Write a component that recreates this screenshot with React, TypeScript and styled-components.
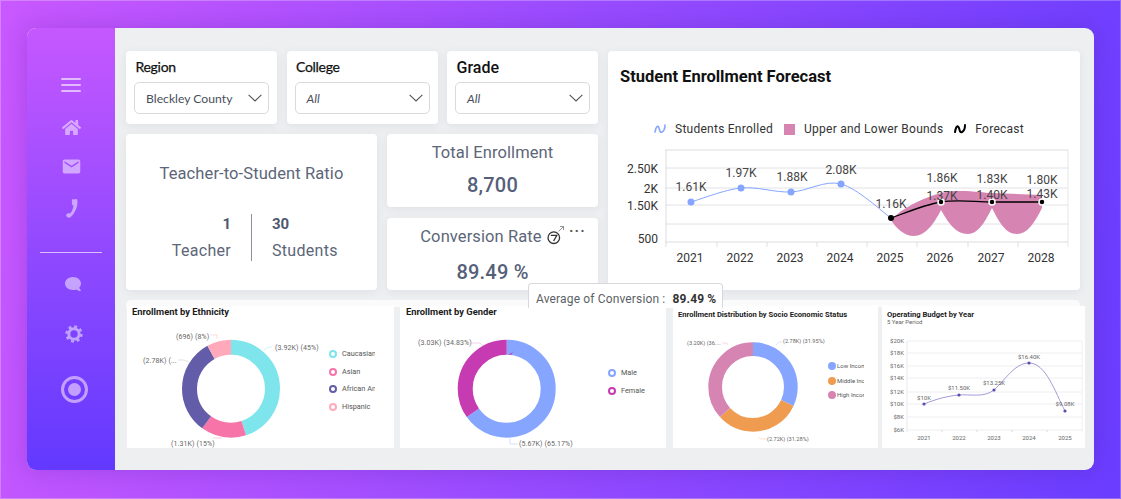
import React, { FC } from "react";
import styled, { createGlobalStyle } from "styled-components";
import { FaHome, FaComment } from "react-icons/fa";
import { MdEmail } from "react-icons/md";

const GlobalStyle = createGlobalStyle`
    html, body {
        margin: 0;
        padding: 0;
        overflow: hidden;
    }
    * {
        box-sizing: border-box;
    }
`;

const Page = styled.div`
    width: 1121px;
    height: 499px;
    padding: 28px 27px 29px;
    background: linear-gradient(100deg, #c958ff 0%, #9a4cff 48%, #6a3dff 100%);
    box-shadow: inset 0 0 0 1px rgba(255, 255, 255, 0.25);
    font-family: Roboto, sans-serif;
`;

const Frame = styled.div`
    display: flex;
    width: 1067px;
    height: 442px;
    border-radius: 9px;
    overflow: hidden;
    background: #eeeff1;
    box-shadow: 0 0 24px rgba(60, 20, 130, 0.22);
`;

const Sidebar = styled.nav`
    width: 88px;
    flex: none;
    display: flex;
    flex-direction: column;
    align-items: center;
    padding-top: 46px;
    background: linear-gradient(180deg, #c558ff 0%, #8c48ff 55%, #6339ff 100%);
    color: rgba(255, 255, 255, 0.5);
`;

const NavSlot = styled.div<{ $top: number; $shift?: number }>`
    display: flex;
    justify-content: center;
    align-items: center;
    height: 22px;
    margin-top: ${(p) => p.$top}px;
    padding-left: ${(p) => p.$shift ?? 0}px;
`;

const Burger = styled.div`
    display: flex;
    flex-direction: column;
    gap: 4px;
    width: 20px;
    span {
        height: 2px;
        border-radius: 1px;
        background: rgba(255, 255, 255, 0.6);
    }
`;

const Divider = styled.div`
    width: 62px;
    height: 1px;
    margin-top: 33px;
    background: rgba(255, 255, 255, 0.65);
`;

const ChatIcon = styled(FaComment)`
    transform: scaleX(-1);
`;

const Ring = styled.div`
    display: flex;
    align-items: center;
    justify-content: center;
    width: 27px;
    height: 27px;
    margin-left: 6px;
    margin-top: 31px;
    border: 3px solid #c3a0ff;
    border-radius: 50%;
    &::after {
        content: "";
        width: 13px;
        height: 13px;
        border-radius: 50%;
        background: #c3a0ff;
    }
`;

const Main = styled.main`
    flex: 1;
    min-width: 0;
    padding: 23px 0 0 11px;
`;

const TopGrid = styled.div`
    display: grid;
    grid-template-columns: 472px 472px;
    column-gap: 10px;
`;

const LeftColumn = styled.div`
    display: flex;
    flex-direction: column;
    gap: 10px;
`;

const FilterRow = styled.div`
    display: flex;
    justify-content: space-between;
`;

const Card = styled.section`
    background: #fff;
    border-radius: 4px;
    box-shadow: 0 2px 8px rgba(60, 60, 90, 0.08);
`;

const FilterCard = styled(Card)`
    width: 151px;
    height: 73px;
    padding: 8px 8px 0;
    display: flex;
    flex-direction: column;
`;

const FilterLabel = styled.div<{ $large?: boolean }>`
    height: 17px;
    padding-left: 1.5px;
    color: #111;
    font-family: ${(p) => (p.$large ? "Roboto" : "Lato")}, sans-serif;
    font-size: ${(p) => (p.$large ? 16 : 14)}px;
    font-weight: ${(p) => (p.$large ? 500 : 400)};
    line-height: ${(p) => (p.$large ? 18 : 16)}px;
    letter-spacing: ${(p) => (p.$large ? 0 : -0.3)}px;
    -webkit-text-stroke: ${(p) => (p.$large ? 0 : 0.25)}px #111;
`;

const Select = styled.div`
    display: flex;
    align-items: center;
    justify-content: space-between;
    height: 32px;
    margin-top: 6px;
    padding: 0 6px 0 11px;
    border: 1px solid #d9dade;
    border-radius: 5px;
    color: #4a4f5c;
    font-family: Lato, sans-serif;
    font-size: 12.2px;
`;

const SelectValue = styled.span<{ $italic?: boolean }>`
    font-style: ${(p) => (p.$italic ? "italic" : "normal")};
`;

const KpiRow = styled.div`
    display: flex;
    gap: 10px;
`;

const RatioCard = styled(Card)`
    width: 251px;
    height: 156px;
    display: flex;
    flex-direction: column;
    align-items: center;
    padding-top: 30px;
    color: #5c6678;
`;

const KpiTitle = styled.div`
    font-size: 16.5px;
    line-height: 20px;
    color: #5c6678;
    letter-spacing: 0.1px;
    white-space: nowrap;
`;

const RatioBody = styled.div`
    display: grid;
    grid-template-columns: 125px 1px 125px;
    width: 251px;
    height: 46px;
    margin-top: 30px;
`;

const RatioSide = styled.div<{ $end?: boolean }>`
    display: flex;
    flex-direction: column;
    align-items: ${(p) => (p.$end ? "flex-end" : "flex-start")};
    padding: ${(p) => (p.$end ? "0 20px 0 0" : "0 0 0 20px")};
`;

const RatioNumber = styled.div`
    font-size: 15px;
    font-weight: 700;
    line-height: 20px;
    color: #4e5870;
`;

const RatioLabel = styled.div`
    margin-top: 7px;
    font-size: 16px;
    line-height: 20px;
    letter-spacing: 0.3px;
`;

const RatioRule = styled.div`
    background: #8a909c;
`;

const KpiColumn = styled.div`
    width: 211px;
    display: flex;
    flex-direction: column;
    gap: 11px;
`;

const KpiCard = styled(Card)`
    position: relative;
    height: 72.5px;
    padding-top: 9px;
    display: flex;
    flex-direction: column;
    align-items: center;
`;

const KpiValue = styled.div<{ $top: number }>`
    margin-top: ${(p) => p.$top}px;
    font-size: 20px;
    font-weight: 500;
    line-height: 26px;
    color: #55607a;
    letter-spacing: 0.2px;
`;

const TitleRow = styled.div`
    display: flex;
    align-items: center;
    gap: 5px;
    margin-top: -1px;
`;

const Dots = styled.div`
    position: absolute;
    top: 2px;
    right: 12px;
    font-size: 14px;
    font-weight: 700;
    line-height: 14px;
    letter-spacing: 1.5px;
    color: #555;
`;

const Tooltip = styled.div`
    position: absolute;
    z-index: 3;
    left: 141px;
    top: 65px;
    display: flex;
    gap: 7px;
    width: 195px;
    height: 25px;
    padding: 8px 0 0 7px;
    background: #fff;
    border: 1px solid #d8d8dc;
    border-radius: 4px 4px 0 0;
    border-bottom: none;
    font-size: 12px;
    line-height: 15px;
    letter-spacing: 0.15px;
    color: #5b5f66;
    white-space: nowrap;
    b {
        font-weight: 700;
        color: #333;
    }
`;

const ForecastCard = styled(Card)`
    height: 239px;
    padding-top: 16px;
    display: flex;
    flex-direction: column;
`;

const ForecastTitle = styled.h2`
    margin: 0 0 0 12px;
    font-size: 16.5px;
    font-weight: 700;
    line-height: 20px;
    color: #111;
`;

const ForecastLegend = styled.div`
    display: flex;
    align-items: center;
    justify-content: center;
    gap: 11px;
    height: 18px;
    margin-top: 33px;
    padding-right: 10px;
    font-size: 12px;
    letter-spacing: 0.25px;
    color: #333;
`;

const LegendEntry = styled.div`
    display: flex;
    align-items: center;
    gap: 9px;
`;

const LegendSwatch = styled.span`
    width: 11px;
    height: 11px;
    background: #d685b3;
`;

const ChartSvg = styled.svg`
    display: block;
    flex: none;
    font-family: Roboto, sans-serif;
`;

const Strip = styled.div`
    width: 954px;
    height: 7px;
    margin-top: 10px;
    background: #fbfbfc;
    border-radius: 5px 5px 0 0;
`;

const ChartRow = styled.div`
    display: flex;
    height: 142px;
    margin-left: 1px;
    margin-top: -1px;
`;

const ChartCard = styled.section<{ $w: number; $after: number }>`
    position: relative;
    flex: none;
    width: ${(p) => p.$w}px;
    margin-right: ${(p) => p.$after}px;
    background: #fff;
    overflow: hidden;
`;

const ChartTitle = styled.h3<{ $left: number; $size?: number; $top?: number }>`
    margin: 0;
    padding: ${(p) => p.$top ?? 0}px 0 0 ${(p) => p.$left}px;
    height: 12px;
    font-size: ${(p) => p.$size ?? 9.4}px;
    font-weight: 700;
    line-height: 12px;
    color: #1b1b1b;
    white-space: nowrap;
`;

const ChartSub = styled.div`
    padding-left: 5px;
    height: 8px;
    font-size: 6px;
    line-height: 8px;
    color: #666;
`;

const ChartBody = styled.div`
    display: flex;
`;

const Legend = styled.ul<{ $top: number; $gap: number; $w: number }>`
    list-style: none;
    margin: ${(p) => p.$top}px 0 0;
    padding: 0;
    width: ${(p) => p.$w}px;
    display: flex;
    flex-direction: column;
    gap: ${(p) => p.$gap}px;
    overflow: hidden;
`;

const LegendItem = styled.li<{ $tight?: boolean }>`
    display: flex;
    align-items: center;
    gap: ${(p) => (p.$tight ? 1 : 5)}px;
    height: 10px;
    font-size: ${(p) => (p.$tight ? 6 : 7.3)}px;
    line-height: 10px;
    color: #555;
    white-space: nowrap;
`;

const LegendRing = styled.span<{ $color: string; $solid?: boolean }>`
    flex: none;
    width: 8px;
    height: 8px;
    border-radius: 50%;
    border: ${(p) => (p.$solid ? 4 : 2.8)}px solid ${(p) => p.$color};
`;

type Point = [number, number];

// catmull-rom through the points, close enough to the chart lib's spline
const smooth = (pts: Point[]): string => {
    let d = `M${pts[0][0]} ${pts[0][1]}`;
    for (let i = 0; i < pts.length - 1; i++) {
        const p0 = pts[Math.max(i - 1, 0)];
        const p1 = pts[i];
        const p2 = pts[i + 1];
        const p3 = pts[Math.min(i + 2, pts.length - 1)];
        const c1x = p1[0] + (p2[0] - p0[0]) / 6;
        const c1y = p1[1] + (p2[1] - p0[1]) / 6;
        const c2x = p2[0] - (p3[0] - p1[0]) / 6;
        const c2y = p2[1] - (p3[1] - p1[1]) / 6;
        d += ` C${c1x} ${c1y} ${c2x} ${c2y} ${p2[0]} ${p2[1]}`;
    }
    return d;
};

interface Slice {
    value: number;
    color: string;
}

const Donut: FC<{ cx: number; cy: number; outer: number; inner: number; slices: Slice[] }> = ({
    cx,
    cy,
    outer,
    inner,
    slices,
}) => {
    let start = 0;
    return (
        <g transform={`rotate(-90 ${cx} ${cy})`}>
            {slices.map((s) => {
                const el = (
                    <circle
                        key={s.color}
                        cx={cx}
                        cy={cy}
                        r={(outer + inner) / 2}
                        fill="none"
                        stroke={s.color}
                        strokeWidth={outer - inner}
                        pathLength={100}
                        strokeDasharray={`${s.value} ${100 - s.value}`}
                        strokeDashoffset={-start}
                    />
                );
                start += s.value;
                return el;
            })}
        </g>
    );
};

const ChevronDown = () => (
    <svg width="14" height="8" viewBox="0 0 14 8" fill="none" stroke="#555" strokeWidth="1.1">
        <path d="M0.6 0.8L7 7l6.4-6.2" />
    </svg>
);

const LineGlyph: FC<{ color: string; width?: number }> = ({ color, width = 1.6 }) => (
    <svg width="12" height="10" viewBox="0 0 12 10" fill="none" stroke={color} strokeWidth={width} strokeLinecap="round">
        <path d="M1 8C2 2 4 1 5 4s1 5 3 4 3-4 3-7" />
    </svg>
);

const PhoneGlyph = () => (
    <svg width="12" height="19" viewBox="0 0 12 19" fill="currentColor">
        <path d="M7.5 0.6l2.6-0.5c0.6 0 1 0.3 1.2 0.9 0.8 5.5-1.5 12.2-6.6 17-0.5 0.5-1 0.7-1.6 0.7-1.3 0-2.7-0.8-2.9-1.6-0.2-1.1 0.3-2.1 1.3-2.6 1.1-0.5 1.9-0.4 2.7 0.1 1.9-2.3 3-5 3.2-8-1-0.3-1.5-0.8-1.5-1.8l0-2.6c0-1 0.2-1.6 0.6-2.1z" />
    </svg>
);

const GearGlyph = () => (
    <svg width="18" height="18" viewBox="0 0 18 18" fill="none" stroke="currentColor">
        <circle cx="9" cy="9" r="5.2" strokeWidth="3" />
        <circle cx="9" cy="9" r="7.6" strokeWidth="2.2" strokeDasharray="3 2.97" />
    </svg>
);

const ZodiacGlyph = () => (
    <svg width="18" height="22" viewBox="0 0 18 22" fill="none" stroke="#333" strokeWidth="1.3">
        <circle cx="6.8" cy="11.7" r="5.8" />
        <path d="M3.8 9.4h6L6.6 15" />
        <path d="M11.5 5.5l5-5M13 0.5h3.5V4" strokeWidth="0.8" stroke="#777" />
    </svg>
);

const forecastYears: [string, number][] = [
    ["2021", 691],
    ["2022", 741],
    ["2023", 791],
    ["2024", 841],
    ["2025", 891],
    ["2026", 941],
    ["2027", 992],
    ["2028", 1042],
];

const actual: Point[] = [
    [691, 202],
    [741, 188],
    [791, 192],
    [841, 184],
    [891, 218],
];

const forecast: Point[] = [
    [891, 218],
    [941, 202],
    [992, 202],
    [1042, 202],
];

const bandPath =
    "M891 220C898 212 916 200 941 193C950 191 955 191 960 191C975 191 985 193 992 193L1042 195L1042 208" +
    "C1034 224 1027 234 1017 234C1005 234 998 220 992 208C985 222 978 234 968 234C955 234 948 222 941 210" +
    "C934 224 925 236 914 236C904 236 896 228 891 220Z";

const ForecastChart = () => (
    <ChartSvg width="472" height="152" viewBox="608 138 472 152">
        {[150, 168, 188, 205, 224, 242].map((y) => (
            <line key={y} x1="665" x2="1068" y1={y} y2={y} stroke={y === 150 || y === 242 ? "#dcdde0" : "#e1e2e5"} />
        ))}
        <line x1="666" x2="666" y1="150" y2="247" stroke="#dcdde0" />
        <line x1="1068" x2="1068" y1="150" y2="247" stroke="#e6e7ea" />
        {[717, 767, 817, 867, 917, 968, 1018].map((x) => (
            <line key={x} x1={x} x2={x} y1="242" y2="247" stroke="#dcdde0" />
        ))}
        <g fontSize="12" fill="#333" textAnchor="end">
            <text x="658" y="173">2.50K</text>
            <text x="658" y="193">2K</text>
            <text x="658" y="210">1.50K</text>
            <text x="658" y="243">500</text>
        </g>
        <g fontSize="12" fill="#333" textAnchor="middle">
            {forecastYears.map(([y, x]) => (
                <text key={y} x={x - 1} y="262">{y}</text>
            ))}
        </g>
        <path d={bandPath} fill="#d685b3" />
        <path d={smooth(actual)} fill="none" stroke="#85a5ff" strokeWidth="1" />
        <path d={smooth(forecast)} fill="none" stroke="#000" strokeWidth="1.3" />
        {actual.slice(0, 4).map(([x, y]) => (
            <circle key={x} cx={x} cy={y} r="3.5" fill="#85a5ff" />
        ))}
        {forecast.map(([x, y]) => (
            <circle key={x} cx={x} cy={y} r="3" fill="#000" stroke="#fff" strokeWidth={x === 891 ? 0 : 1.5} />
        ))}
        <g fontSize="12" fill="#444" textAnchor="middle">
            <text x="691" y="191">1.61K</text>
            <text x="741" y="177">1.97K</text>
            <text x="792" y="181">1.88K</text>
            <text x="841" y="174">2.08K</text>
            <text x="891" y="208">1.16K</text>
            <text x="942" y="182">1.86K</text>
            <text x="992" y="183">1.83K</text>
            <text x="1042" y="184">1.80K</text>
            <text x="942" y="200">1.37K</text>
            <text x="992" y="199">1.40K</text>
            <text x="1042" y="198">1.43K</text>
        </g>
    </ChartSvg>
);

const EthnicityChart = () => (
    <ChartSvg width="202" height="130" viewBox="127 318 202 130">
        <Donut
            cx={231}
            cy={388.7}
            outer={49}
            inner={34}
            slices={[
                { value: 45, color: "#7fe5ec" },
                { value: 15, color: "#f774a8" },
                { value: 32, color: "#635ca8" },
                { value: 8, color: "#ffa9ba" },
            ]}
        />
        <g fill="none" stroke="#d5d5e0" strokeWidth="0.7">
            <path d="M264 350l5-3h3" stroke="#bdeef2" />
            <path d="M210 335h7v4" stroke="#ffc9d4" />
            <path d="M178 360h6l5 2" />
            <path d="M222 438h-9" stroke="#fbb9d2" />
        </g>
        <g fontSize="7" fill="#666" letterSpacing="0.1">
            <text x="275" y="350">(3.92K) (45%)</text>
            <text x="176" y="339">(696) (8%)</text>
            <text x="143" y="363">(2.78K) (...</text>
            <text x="171" y="446">(1.31K) (15%)</text>
        </g>
    </ChartSvg>
);

const GenderChart = () => (
    <ChartSvg width="208" height="130" viewBox="400 318 208 130">
        <Donut
            cx={506.7}
            cy={388.7}
            outer={49}
            inner={34}
            slices={[
                { value: 65.17, color: "#85a5ff" },
                { value: 34.83, color: "#c63ab2" },
            ]}
        />
        <g fill="none" strokeWidth="0.7">
            <path d="M472 343h8l3 3" stroke="#efb8e4" />
            <path d="M510 438v6h8" stroke="#c4d2ff" />
        </g>
        <g fontSize="7" fill="#666" letterSpacing="0.1">
            <text x="418" y="345">(3.03K) (34.83%)</text>
            <text x="519" y="446">(5.67K) (65.17%)</text>
        </g>
    </ChartSvg>
);

const SocioChart = () => (
    <ChartSvg width="155" height="130" viewBox="673 318 155 130">
        <Donut
            cx={753}
            cy={387}
            outer={44.7}
            inner={31}
            slices={[
                { value: 31.95, color: "#85a5ff" },
                { value: 31.28, color: "#f09c50" },
                { value: 36.77, color: "#d685b3" },
            ]}
        />
        <g fill="none" strokeWidth="0.6">
            <path d="M776 345l3-3h3" stroke="#c4d2ff" />
            <path d="M722 343h5l1 2" stroke="#eec2dc" />
            <path d="M759 437l2 2h6" stroke="#f7cfa8" />
        </g>
        <g fontSize="5.6" fill="#666">
            <text x="783" y="343">(2.78K) (31.95%)</text>
            <text x="687" y="345">(3.20K) (36....</text>
            <text x="767" y="441">(2.72K) (31.28%)</text>
        </g>
    </ChartSvg>
);

const budget: Point[] = [
    [924, 404],
    [959, 395],
    [994, 390],
    [1029, 363],
    [1065, 411],
];

const BudgetChart = () => (
    <ChartSvg width="203" height="122" viewBox="882 326 203 122">
        {[341, 353, 366, 378, 392, 404, 417, 430].map((y, i) => (
            <g key={y}>
                <line x1="907" x2="1082" y1={y} y2={y} stroke="#eeeef1" />
                <text x="904" y={y + 2} fontSize="6" fill="#666" textAnchor="end">
                    {["$20K", "$18K", "$16K", "$14K", "$12K", "$10K", "$8K", "$6K"][i]}
                </text>
            </g>
        ))}
        <line x1="907" x2="907" y1="341" y2="432" stroke="#e8e8ec" />
        <line x1="1082" x2="1082" y1="341" y2="432" stroke="#f0f0f3" />
        {[942, 977, 1012, 1047].map((x) => (
            <line key={x} x1={x} x2={x} y1="430" y2="432" stroke="#dcdce0" />
        ))}
        <g fontSize="6" fill="#666" textAnchor="middle">
            {["2021", "2022", "2023", "2024", "2025"].map((y, i) => (
                <text key={y} x={budget[i][0]} y="440">{y}</text>
            ))}
        </g>
        <path
            d="M924 404C936 399 948 396 959 395C970 394 984 398 994 390C1006 379 1015 363 1029 363C1046 363 1055 392 1065 411"
            fill="none"
            stroke="#9a8fd0"
            strokeWidth="0.9"
        />
        {budget.map(([x, y]) => (
            <circle key={x} cx={x} cy={y} r="1.6" fill="#5a4bb0" />
        ))}
        <g fontSize="6" fill="#666" textAnchor="middle">
            <text x="924" y="400">$10K</text>
            <text x="959" y="390">$11.50K</text>
            <text x="994" y="385">$13.25K</text>
            <text x="1029" y="359">$16.40K</text>
            <text x="1065" y="406">$9.08K</text>
        </g>
    </ChartSvg>
);

const legendRows = {
    ethnicity: [
        ["Caucasian", "#7fe5ec"],
        ["Asian", "#f774a8"],
        ["African American", "#635ca8"],
        ["Hispanic", "#ffa9ba"],
    ],
    gender: [
        ["Male", "#85a5ff"],
        ["Female", "#c63ab2"],
    ],
    socio: [
        ["Low Income", "#85a5ff"],
        ["Middle Income", "#f09c50"],
        ["High Income", "#d685b3"],
    ],
};

export default function App() {
    return (
        <Page>
            <GlobalStyle />
            <Frame>
                <Sidebar>
                    <NavSlot $top={0}>
                        <Burger>
                            <span />
                            <span />
                            <span />
                        </Burger>
                    </NavSlot>
                    <NavSlot $top={20}>
                        <FaHome size={19} />
                    </NavSlot>
                    <NavSlot $top={17}>
                        <MdEmail size={21} />
                    </NavSlot>
                    <NavSlot $top={20} $shift={2}>
                        <PhoneGlyph />
                    </NavSlot>
                    <Divider />
                    <NavSlot $top={20} $shift={3}>
                        <ChatIcon size={16} />
                    </NavSlot>
                    <NavSlot $top={28} $shift={6}>
                        <GearGlyph />
                    </NavSlot>
                    <Ring />
                </Sidebar>
                <Main>
                    <TopGrid>
                        <LeftColumn>
                            <FilterRow>
                                <FilterCard>
                                    <FilterLabel>Region</FilterLabel>
                                    <Select>
                                        <SelectValue>Bleckley County</SelectValue>
                                        <ChevronDown />
                                    </Select>
                                </FilterCard>
                                <FilterCard>
                                    <FilterLabel>College</FilterLabel>
                                    <Select>
                                        <SelectValue $italic>All</SelectValue>
                                        <ChevronDown />
                                    </Select>
                                </FilterCard>
                                <FilterCard>
                                    <FilterLabel $large>Grade</FilterLabel>
                                    <Select>
                                        <SelectValue $italic>All</SelectValue>
                                        <ChevronDown />
                                    </Select>
                                </FilterCard>
                            </FilterRow>
                            <KpiRow>
                                <RatioCard>
                                    <KpiTitle>Teacher-to-Student Ratio</KpiTitle>
                                    <RatioBody>
                                        <RatioSide $end>
                                            <RatioNumber>1</RatioNumber>
                                            <RatioLabel>Teacher</RatioLabel>
                                        </RatioSide>
                                        <RatioRule />
                                        <RatioSide>
                                            <RatioNumber>30</RatioNumber>
                                            <RatioLabel>Students</RatioLabel>
                                        </RatioSide>
                                    </RatioBody>
                                </RatioCard>
                                <KpiColumn>
                                    <KpiCard>
                                        <KpiTitle>Total Enrollment</KpiTitle>
                                        <KpiValue $top={9}>8,700</KpiValue>
                                    </KpiCard>
                                    <KpiCard>
                                        <TitleRow>
                                            <KpiTitle>Conversion Rate</KpiTitle>
                                            <ZodiacGlyph />
                                        </TitleRow>
                                        <Dots>...</Dots>
                                        <KpiValue $top={11}>89.49 %</KpiValue>
                                        <Tooltip>
                                            Average of Conversion : <b>89.49 %</b>
                                        </Tooltip>
                                    </KpiCard>
                                </KpiColumn>
                            </KpiRow>
                        </LeftColumn>
                        <ForecastCard>
                            <ForecastTitle>Student Enrollment Forecast</ForecastTitle>
                            <ForecastLegend>
                                <LegendEntry>
                                    <LineGlyph color="#85a5ff" />
                                    Students Enrolled
                                </LegendEntry>
                                <LegendEntry>
                                    <LegendSwatch />
                                    Upper and Lower Bounds
                                </LegendEntry>
                                <LegendEntry>
                                    <LineGlyph color="#000" width={2} />
                                    Forecast
                                </LegendEntry>
                            </ForecastLegend>
                            <ForecastChart />
                        </ForecastCard>
                    </TopGrid>
                    <Strip />
                    <ChartRow>
                        <ChartCard $w={267} $after={6}>
                            <ChartTitle $left={5}>Enrollment by Ethnicity</ChartTitle>
                            <ChartBody>
                                <EthnicityChart />
                                <Legend $top={31} $gap={7.7} $w={46}>
                                    {legendRows.ethnicity.map(([name, color]) => (
                                        <LegendItem key={name}>
                                            <LegendRing $color={color} />
                                            {name}
                                        </LegendItem>
                                    ))}
                                </Legend>
                            </ChartBody>
                        </ChartCard>
                        <ChartCard $w={266} $after={7}>
                            <ChartTitle $left={6}>Enrollment by Gender</ChartTitle>
                            <ChartBody>
                                <GenderChart />
                                <Legend $top={50} $gap={7.5} $w={50}>
                                    {legendRows.gender.map(([name, color]) => (
                                        <LegendItem key={name}>
                                            <LegendRing $color={color} />
                                            {name}
                                        </LegendItem>
                                    ))}
                                </Legend>
                            </ChartBody>
                        </ChartCard>
                        <ChartCard $w={205} $after={4}>
                            <ChartTitle $left={5} $size={7.6} $top={3}>
                                Enrollment Distribution by Socio Economic Status
                            </ChartTitle>
                            <ChartBody>
                                <SocioChart />
                                <Legend $top={43} $gap={4.5} $w={36}>
                                    {legendRows.socio.map(([name, color]) => (
                                        <LegendItem key={name} $tight>
                                            <LegendRing $color={color} $solid />
                                            {name}
                                        </LegendItem>
                                    ))}
                                </Legend>
                            </ChartBody>
                        </ChartCard>
                        <ChartCard $w={203} $after={0}>
                            <ChartTitle $left={5} $size={7.6} $top={3}>
                                Operating Budget by Year
                            </ChartTitle>
                            <ChartSub>5 Year Period</ChartSub>
                            <BudgetChart />
                        </ChartCard>
                    </ChartRow>
                </Main>
            </Frame>
        </Page>
    );
}
